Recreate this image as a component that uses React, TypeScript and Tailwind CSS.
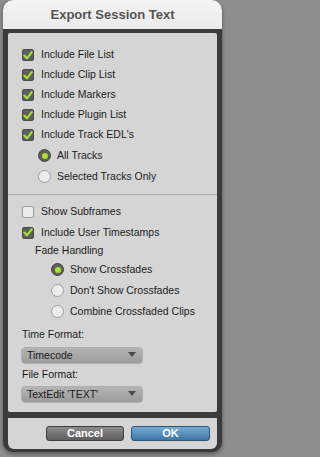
import React from "react";

const font = { fontFamily: '"Liberation Sans", Arial, sans-serif' };

const Check = ({ checked }: { checked: boolean }) =>
  checked ? (
    <span className="flex h-[12px] w-[12px] items-center justify-center rounded-[2px] border border-[#4a4a4a] bg-[#5e5e5e]">
      <svg width="10" height="9" viewBox="0 0 10 9">
        <path d="M1.3 4.6 L3.9 7.3 L8.8 1.2" fill="none" stroke="#a6e22a" strokeWidth="2.1" strokeLinecap="round" strokeLinejoin="round" />
      </svg>
    </span>
  ) : (
    <span className="h-[12px] w-[12px] rounded-[2px] border border-[#9a9a9a] bg-[#ececec]" />
  );

const Radio = ({ on }: { on: boolean }) =>
  on ? (
    <span className="flex h-[13px] w-[13px] items-center justify-center rounded-full border border-[#444] bg-[#5e5e5e]">
      <span className="h-[6px] w-[6px] rounded-full bg-[#a6e22a]" />
    </span>
  ) : (
    <span className="h-[13px] w-[13px] rounded-full border border-[#a0a0a0] bg-[#ececec]" />
  );

const CheckRow = ({ label, checked }: { label: string; checked: boolean }) => (
  <div className="flex h-[20px] items-center gap-[7px] pl-[14px]">
    <Check checked={checked} />
    <span>{label}</span>
  </div>
);

const RadioRow = ({ label, on, indent }: { label: string; on: boolean; indent: string }) => (
  <div className={`flex h-[21px] items-center gap-[6px] ${indent}`}>
    <Radio on={on} />
    <span>{label}</span>
  </div>
);

const Dropdown = ({ value }: { value: string }) => (
  <div className="ml-[14px] flex h-[15px] w-[120px] items-center justify-between rounded-[3px] bg-gradient-to-b from-[#b4b4b4] to-[#9c9c9c] pl-[5px] pr-[6px] shadow-[0_0_0_0.5px_#8a8a8a]">
    <span className="text-[10.5px] text-[#1a1a1a]">{value}</span>
    <svg width="8" height="5" viewBox="0 0 8 5" className="-mt-[3px]">
      <path d="M0 0 H8 L4 5 Z" fill="#4a4a4a" />
    </svg>
  </div>
);

export default function App() {
  return (
    <div className="h-[457px] w-full min-w-[225px] bg-[#8e8e8e]" style={font}>
      <div className="ml-[3px] flex w-[219px] flex-col rounded-[10px] bg-[#3b3b3b] pb-[3px] shadow-[0_2px_4px_rgba(0,0,0,0.4)]">
        <div className="flex h-[29px] items-center justify-center rounded-t-[10px] bg-gradient-to-b from-[#f4f4f4] to-[#ebebeb]">
          <span className="text-[13px] font-bold text-[#555555]">Export Session Text</span>
        </div>
        <div className="mx-[5px] mt-[4px] flex flex-col rounded-[2px] bg-[#d5d5d5] pb-[10px] pt-[12px] text-[10.5px] text-[#1c1c1c]">
          <CheckRow label="Include File List" checked />
          <CheckRow label="Include Clip List" checked />
          <CheckRow label="Include Markers" checked />
          <CheckRow label="Include Plugin List" checked />
          <CheckRow label="Include Track EDL's" checked />
          <RadioRow label="All Tracks" on indent="pl-[30px]" />
          <RadioRow label="Selected Tracks Only" on={false} indent="pl-[30px]" />
          <div className="mt-[7px] h-px bg-[#a9a9a9]" />
          <div className="mt-[7px]" />
          <CheckRow label="Show Subframes" checked={false} />
          <div className="flex h-[21px] items-center gap-[7px] pl-[14px]">
            <Check checked />
            <span>Include User Timestamps</span>
          </div>
          <div className="flex h-[16px] items-center pl-[27px]">Fade Handling</div>
          <RadioRow label="Show Crossfades" on indent="pl-[43px]" />
          <RadioRow label="Don't Show Crossfades" on={false} indent="pl-[43px]" />
          <RadioRow label="Combine Crossfaded Clips" on={false} indent="pl-[43px]" />
          <div className="mt-[6px] flex h-[14px] items-center pl-[14px]">Time Format:</div>
          <div className="mt-[6px]">
            <Dropdown value="Timecode" />
          </div>
          <div className="mt-[5px] flex h-[14px] items-center pl-[14px]">File Format:</div>
          <div className="mt-[5px]">
            <Dropdown value="TextEdit 'TEXT'" />
          </div>
        </div>
        <div className="mx-[5px] mt-[6px] flex h-[31px] items-center justify-end gap-[7px] rounded-b-[6px] bg-[#d5d5d5] pr-[7px]">
          <button className="flex h-[15px] w-[78px] items-center justify-center rounded-[3px] border border-[#3e3e3e] bg-gradient-to-b from-[#8c8c8c] to-[#5e5e5e] text-[11px] font-bold text-white">
            Cancel
          </button>
          <button className="flex h-[15px] w-[79px] items-center justify-center rounded-[3px] border border-[#2d5676] bg-gradient-to-b from-[#78acd4] to-[#3c76a6] text-[11px] font-bold text-white">
            OK
          </button>
        </div>
      </div>
    </div>
  );
}
